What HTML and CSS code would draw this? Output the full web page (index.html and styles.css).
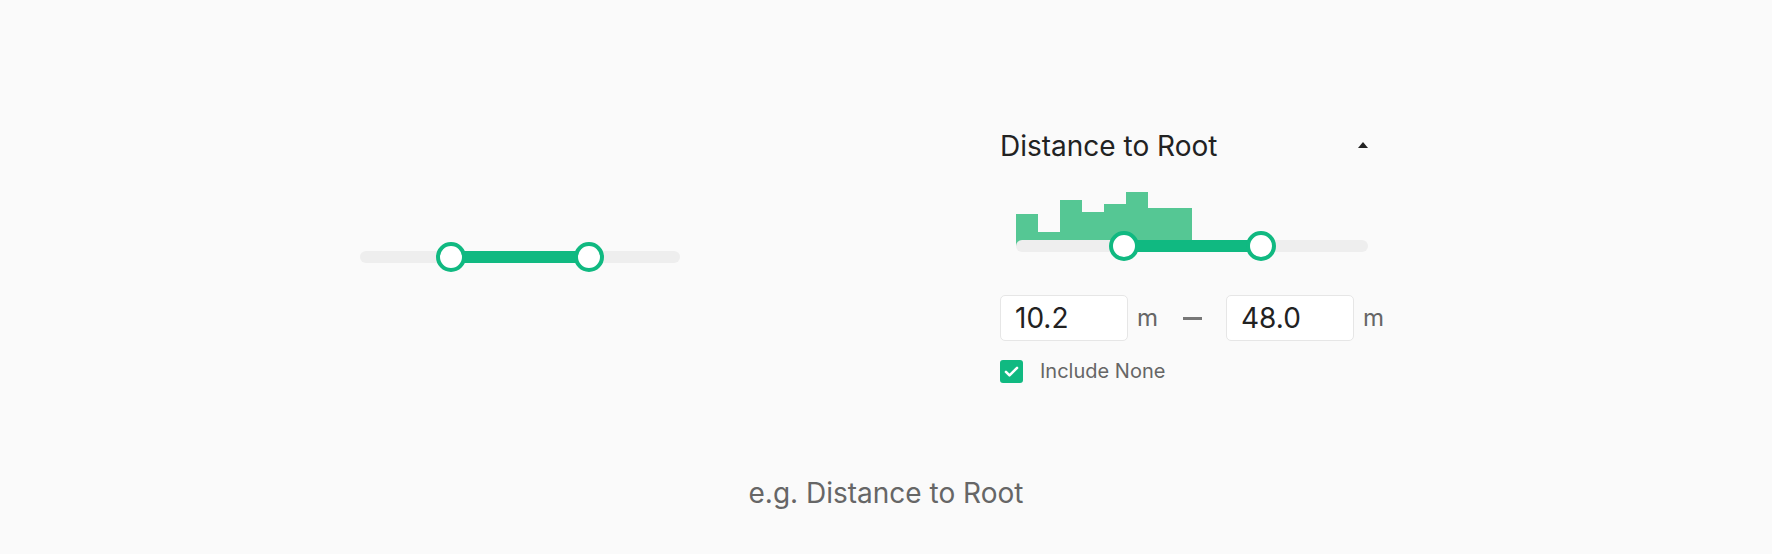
FILE: index.html
```html
<!DOCTYPE html>
<html lang="en">
<head>
<meta charset="utf-8">
<title>Range filter</title>
<link rel="stylesheet" href="styles.css">
</head>
<body>
<main class="page">
  <div class="demo">
    <div class="simple-slider">
      <div class="track">
        <div class="fill" style="left:91px;width:138px"></div>
        <span class="handle" style="left:91px"></span>
        <span class="handle" style="left:229px"></span>
      </div>
    </div>

    <section class="panel">
      <header class="panel-head">
        <h2 class="panel-title">Distance to Root</h2>
        <span class="caret"></span>
      </header>
      <div class="range">
        <div class="hist">
          <span class="bar" style="height:32px"></span>
          <span class="bar" style="height:14px"></span>
          <span class="bar" style="height:46px"></span>
          <span class="bar" style="height:34px"></span>
          <span class="bar" style="height:42px"></span>
          <span class="bar" style="height:54px"></span>
          <span class="bar" style="height:38px"></span>
          <span class="bar" style="height:38px"></span>
        </div>
        <div class="track track-panel">
          <div class="fill" style="left:108px;width:137px"></div>
          <span class="handle" style="left:108px"></span>
          <span class="handle" style="left:245px"></span>
        </div>
      </div>
      <div class="inputs">
        <input class="num" type="text" value="10.2">
        <span class="unit">m</span>
        <span class="dash"></span>
        <input class="num" type="text" value="48.0">
        <span class="unit">m</span>
      </div>
      <label class="check-row">
        <span class="checkbox">
          <svg viewBox="0 0 24 24" width="19" height="19"><path d="M5 12.5l4.5 4.5L19 7.5" fill="none" stroke="#fff" stroke-width="3.2" stroke-linecap="round" stroke-linejoin="round"/></svg>
        </span>
        <span class="check-label">Include None</span>
      </label>
    </section>
  </div>
  <p class="caption">e.g. Distance to Root</p>
</main>
</body>
</html>
```

FILE: styles.css
```css
* { box-sizing: border-box; }
html, body { margin: 0; padding: 0; }
body {
  background: #fafafa;
  font-family: Inter, "Noto Sans", sans-serif;
  color: #222;
}
.page {
  width: 1772px;
  height: 554px;
  display: flex;
  flex-direction: column;
  padding-top: 130px;
}
.demo {
  display: flex;
  align-items: center;
  padding-left: 360px;
}
.simple-slider {
  width: 320px;
  margin-right: 320px;
  flex: none;
}
.track {
  position: relative;
  height: 12px;
  border-radius: 6px;
  background: #eeeeee;
}
.fill {
  position: absolute;
  top: 0;
  height: 12px;
  background: #10b981;
}
.handle {
  position: absolute;
  top: -9px;
  width: 30px;
  height: 30px;
  margin-left: -15px;
  border-radius: 50%;
  border: 4px solid #10b981;
  background: #fff;
}
.panel {
  width: 370px;
  flex: none;
  display: flex;
  flex-direction: column;
}
.panel-head {
  display: flex;
  justify-content: space-between;
  align-items: center;
  height: 32px;
}
.panel-title {
  margin: 0;
  font-size: 28px;
  line-height: 32px;
  font-weight: 400;
  color: #222;
}
.caret {
  width: 0;
  height: 0;
  border-left: 5px solid transparent;
  border-right: 5px solid transparent;
  border-bottom: 6px solid #222;
  margin-right: 2px;
  margin-bottom: 2px;
}
.range {
  margin-top: 24px;
  margin-left: 16px;
  width: 352px;
}
.hist {
  display: flex;
  align-items: flex-end;
  height: 60px;
}
.bar {
  width: 22px;
  background: #55c794;
}
.track-panel {
  margin-top: -6px;
}
.inputs {
  display: flex;
  align-items: center;
  margin-top: 43px;
  height: 46px;
}
.inputs > * { flex: none; }
.num {
  width: 128px;
  height: 46px;
  border: 1px solid #e6e6e6;
  border-radius: 5px;
  background: #fff;
  font-family: Inter, "Noto Sans", sans-serif;
  font-size: 28px;
  color: #222;
  padding: 0 0 0 14px;
  outline: none;
}
.unit {
  font-size: 24px;
  line-height: 46px;
  color: #666;
  margin-left: 9px;
}
.dash {
  width: 19px;
  height: 3px;
  background: #777;
  margin: 0 24px 0 25px;
}
.check-row {
  display: flex;
  align-items: center;
  margin-top: 19px;
  height: 23px;
}
.checkbox {
  flex: none;
  width: 23px;
  height: 23px;
  border-radius: 3px;
  background: #10b981;
  display: flex;
  align-items: center;
  justify-content: center;
}
.check-label {
  margin-left: 17px;
  font-size: 20px;
  line-height: 23px;
  color: #666;
}
.caption {
  margin: 94px 0 0;
  text-align: center;
  font-size: 28px;
  line-height: 32px;
  color: #666;
}
```
